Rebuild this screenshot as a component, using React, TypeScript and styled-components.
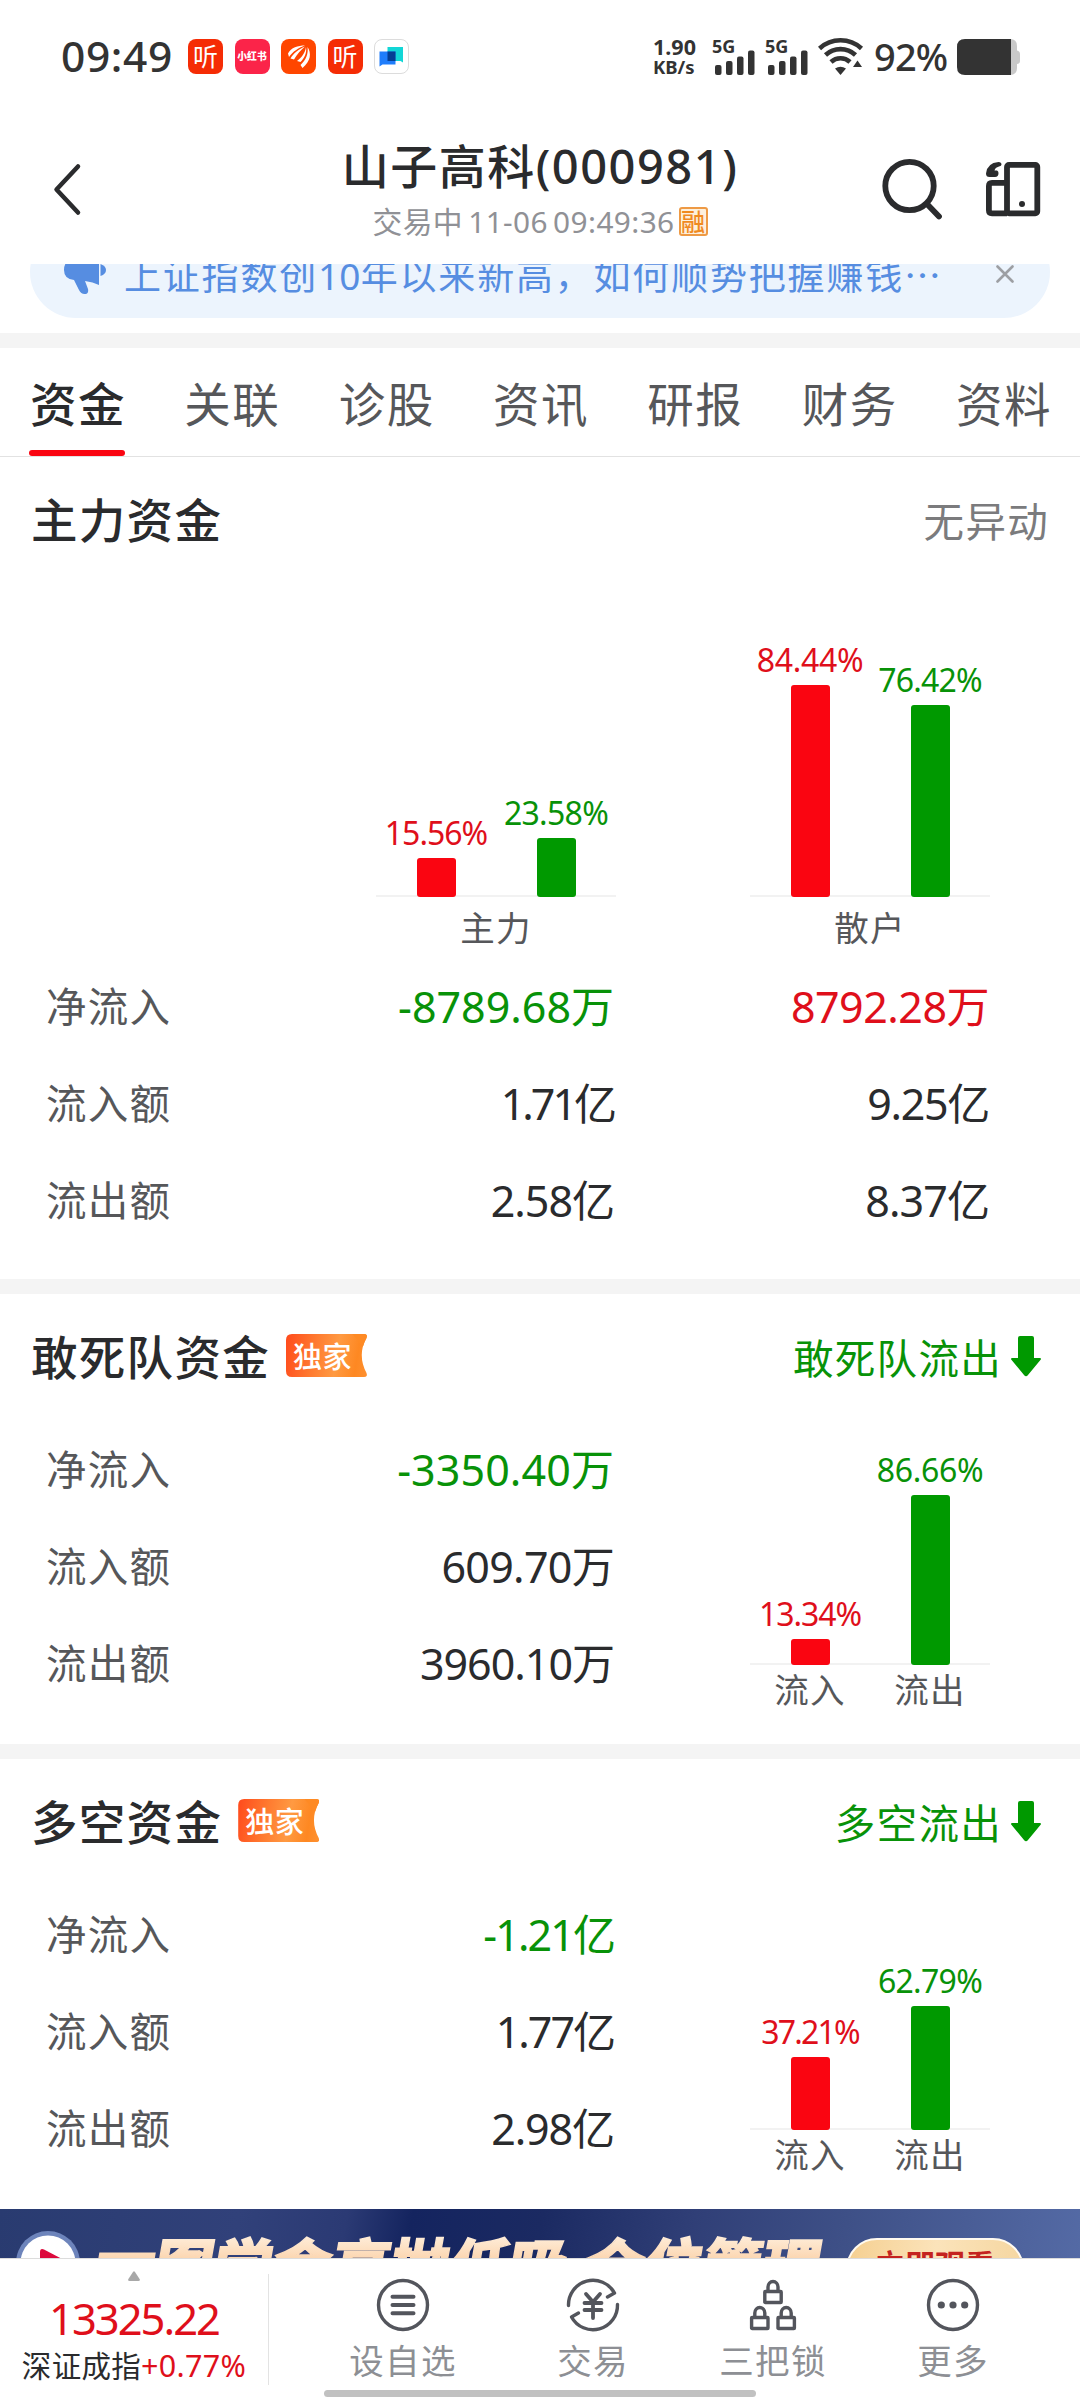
import React from "react";
import styled, { createGlobalStyle, css } from "styled-components";

const RED = "#df0f1b";
const GREEN = "#089208";
const BAR_RED = "#fa0511";
const BAR_GREEN = "#009900";
const INK = "#2a2b2d";
const GREY = "#56575a";

type Tone = "red" | "green" | "ink";
const toneColor = { red: RED, green: GREEN, ink: INK };

const GlobalStyle = createGlobalStyle`
  * { box-sizing: border-box; }
  body {
    margin: 0;
    background: #fff;
    color: ${INK};
    font-family: "Noto Sans", "Noto Sans CJK SC", sans-serif;
    -webkit-font-smoothing: antialiased;
  }
`;

const Screen = styled.div`
  position: relative;
  width: 1080px;
  height: 2400px;
  overflow: hidden;
  display: flex;
  flex-direction: column;
  background: #fff;
  white-space: nowrap;
`;

/* ---------- status bar ---------- */
const StatusBar = styled.div`
  height: 113px;
  flex: none;
  display: flex;
  align-items: center;
  padding: 0 60px 0 61px;
  color: #333;
`;
const Clock = styled.span`
  width: 127px;
  font-size: 42.5px;
  font-weight: 500;
  line-height: 50px;
  letter-spacing: 0.6px;
  padding-bottom: 2px;
`;
const AppIcons = styled.div`
  display: flex;
  gap: 11.5px;
`;
const AppIcon = styled.div<{ $bg: string; $size: number; $bold?: boolean; $outline?: boolean }>`
  width: 35px;
  height: 35px;
  border-radius: 8px;
  background: ${(p) => p.$bg};
  color: #fff;
  font-size: ${(p) => p.$size}px;
  font-weight: ${(p) => (p.$bold ? 900 : 400)};
  line-height: 35px;
  display: flex;
  align-items: center;
  justify-content: center;
  ${(p) => p.$outline && css`border: 1px solid #dcdcdc;`}
`;
const StatusRight = styled.div`
  margin-left: auto;
  display: flex;
  align-items: center;
`;
const NetSpeed = styled.div`
  width: 59px;
  display: flex;
  flex-direction: column;
  font-weight: 700;
  line-height: 20px;
  font-size: 18.5px;
`;
const SpeedValue = styled.span`
  font-size: 21.5px;
`;
const Signal = styled.div`
  width: 53px;
  height: 36px;
  display: flex;
  position: relative;
`;
const SignalLabel = styled.span`
  position: absolute;
  left: 0;
  top: -1px;
  font-size: 18px;
  font-weight: 700;
  line-height: 16px;
`;
const Percent = styled.span`
  width: 93px;
  padding-left: 10px;
  padding-bottom: 2px;
  font-size: 38px;
  font-weight: 500;
  line-height: 44px;
  letter-spacing: -0.8px;
`;

/* ---------- header ---------- */
const Header = styled.header`
  height: 151px;
  flex: none;
  display: grid;
  grid-template-columns: 240px 1fr 240px;
  align-items: center;
`;
const BackCell = styled.div`
  padding-left: 50px;
  display: flex;
`;
const TitleCell = styled.div`
  display: flex;
  flex-direction: column;
  align-items: center;
  padding-top: 4px;
`;
const StockTitle = styled.h1`
  margin: 0;
  font-size: 47px;
  font-weight: 500;
  line-height: 62px;
  letter-spacing: 1.5px;
`;
const SubTitle = styled.div`
  display: flex;
  align-items: center;
  font-size: 29.8px;
  line-height: 49px;
  letter-spacing: 0.4px;
  word-spacing: -3px;
  color: #909196;
`;
const MarginBadge = styled.span`
  margin-left: 4px;
  width: 29px;
  height: 29px;
  border: 2px solid #ee9a45;
  border-radius: 3px;
  background: #fdf0dc;
  color: #f08a1f;
  font-size: 24px;
  font-weight: 500;
  line-height: 25px;
  letter-spacing: 0;
  display: flex;
  justify-content: center;
`;
const ActionCell = styled.div`
  display: flex;
  gap: 41px;
  padding: 0 37px 0 41px;
`;

/* ---------- notice ---------- */
const NoticeClip = styled.div`
  height: 54px;
  flex: none;
  margin: 0 30px 15px;
  display: flex;
  align-items: flex-end;
  overflow: hidden;
`;
const NoticePill = styled.div`
  width: 100%;
  height: 92px;
  flex: none;
  border-radius: 46px;
  background: #ecf4fd;
  display: flex;
  align-items: center;
  padding: 3px 36px 0 33px;
  color: #568de1;
`;
const NoticeText = styled.span`
  margin-left: 17px;
  padding-top: 4px;
  font-size: 37px;
  letter-spacing: 1.8px;
  line-height: 50px;
`;
const TightDigits = styled.span`
  letter-spacing: 0.2px;
`;
const CloseIcon = styled.svg`
  margin-left: auto;
`;

const Divider = styled.div`
  height: 15px;
  flex: none;
  background: #f4f4f4;
`;

/* ---------- tabs ---------- */
const Tabs = styled.nav`
  height: 109px;
  flex: none;
  display: flex;
  justify-content: space-between;
  padding: 0 28px 0 30px;
  border-bottom: 1px solid #e2e2e2;
`;
const Tab = styled.div<{ $active?: boolean }>`
  width: 96px;
  font-size: 46.5px;
  letter-spacing: 1.5px;
  line-height: 112px;
  height: 108px;
  font-weight: ${(p) => (p.$active ? 500 : 400)};
  color: ${(p) => (p.$active ? INK : GREY)};
  display: flex;
  flex-direction: column;
  position: relative;
  ${(p) =>
    p.$active &&
    css`
      &::after {
        content: "";
        position: absolute;
        left: -1px;
        bottom: 0;
        width: 96px;
        height: 6px;
        border-radius: 3px;
        background: ${BAR_RED};
      }
    `}
`;

/* ---------- sections ---------- */
const Section = styled.section<{ $height: number }>`
  height: ${(p) => p.$height}px;
  flex: none;
`;
const SectionHead = styled.div`
  height: 127px;
  padding: 0 31px 1px 31px;
  display: flex;
  align-items: center;
`;
const SectionTitle = styled.h2`
  margin: 0;
  font-size: 46.5px;
  font-weight: 500;
  letter-spacing: 1.3px;
  line-height: 60px;
`;
const SectionStatus = styled.div<{ $green?: boolean }>`
  margin-left: auto;
  margin-right: ${(p) => (p.$green ? 8 : 0)}px;
  padding-bottom: 1px;
  display: flex;
  align-items: center;
  gap: 9px;
  font-size: 40.5px;
  letter-spacing: 1.3px;
  color: ${(p) => (p.$green ? GREEN : "#7b7b7d")};
`;
const Badge = styled.span`
  margin-left: 16px;
  margin-bottom: 3px;
  width: 81px;
  height: 43px;
  padding: 2px 0 0 7px;
  font-size: 29px;
  font-weight: 500;
  line-height: 41px;
  letter-spacing: 0.5px;
  color: #fff;
  background:
    linear-gradient(50deg, rgba(255, 90, 30, 0) 87%, #fe8a24 88%),
    linear-gradient(100deg, #ff4a1c 0%, #ff7a30 35%, #ff9a42 62%, #fe8822 85%, #fe9130 100%);
  clip-path: path("M6 0H78Q82 0 80.5 4Q71 21 80.5 39Q82 43 78 43H6Q0 43 0 37V6Q0 0 6 0Z");
`;

const Charts = styled.div`
  height: 374px;
  display: flex;
  justify-content: flex-end;
  align-items: flex-end;
  gap: 134px;
  padding-right: 90px;
`;
const ChartBox = styled.div`
  width: 240px;
`;
const Plot = styled.div`
  height: 244px;
  display: flex;
  align-items: flex-end;
  background: linear-gradient(#f2f2f2, #f2f2f2) bottom / 100% 2px no-repeat;
`;
const BarColumn = styled.div`
  width: 120px;
  display: flex;
  flex-direction: column;
  align-items: center;
`;
const BarValue = styled.span<{ $tone: "red" | "green"; $track: number }>`
  font-size: 32px;
  line-height: 32px;
  margin-bottom: 9px;
  letter-spacing: ${(p) => p.$track}px;
  color: ${(p) => toneColor[p.$tone]};
`;
const Bar = styled.div<{ $tone: "red" | "green" }>`
  width: 39px;
  border-radius: 3px;
  background: ${(p) => (p.$tone === "red" ? BAR_RED : BAR_GREEN)};
`;
const AxisLabels = styled.div<{ $line: number }>`
  display: flex;
  justify-content: space-around;
  font-size: 34.5px;
  letter-spacing: 1.2px;
  line-height: ${(p) => p.$line}px;
  color: ${GREY};
`;

const Body = styled.div`
  display: flex;
  justify-content: space-between;
  padding-right: 90px;
`;
const Table = styled.div`
  display: flex;
  flex-direction: column;
`;
const Row = styled.div`
  height: 97px;
  display: flex;
  align-items: center;
  padding: 0 0 4px 46px;
`;
const RowLabel = styled.span`
  width: 196px;
  font-size: 40.5px;
  letter-spacing: 1.3px;
  color: ${GREY};
`;
const Amount = styled.span<{ $tone: Tone; $track: number }>`
  width: 372px;
  text-align: right;
  font-size: 43px;
  letter-spacing: ${(p) => p.$track}px;
  color: ${(p) => toneColor[p.$tone]};
  & + & {
    width: 375px;
  }
`;

/* ---------- promo banner ---------- */
const Promo = styled.div`
  height: 49px;
  flex: none;
  display: flex;
  align-items: flex-start;
  overflow: hidden;
  padding-left: 16px;
  background: linear-gradient(100deg, #293b70 0%, #31417a 22%, #2b3a74 32%, #14245f 38%, #1b2a62 50%, #303f77 64%, #3e5087 78%, #546aa5 100%);
`;
const PromoText = styled.span`
  margin: 21px 0 0 15px;
  width: 733px;
  font-family: "Noto Sans CJK SC", sans-serif;
  font-size: 59px;
  font-weight: 900;
  line-height: 66px;
  transform: skewX(-10deg);
  transform-origin: 0 60%;
  word-spacing: 4px;
  color: transparent;
  -webkit-text-stroke: 1.5px transparent;
  background: linear-gradient(#fff3e4, #fbcfa4 36px);
  background-clip: text;
  -webkit-background-clip: text;
`;
const PromoLead = styled.span`
  line-height: 0;
  vertical-align: 7px;
`;
const PromoButton = styled.span`
  margin: 29px 0 0 18px;
  width: 178px;
  height: 62px;
  flex: none;
  border: 2px solid #fffaf0;
  border-radius: 31px;
  background: linear-gradient(95deg, #f5cf90, #fbe3ba 50%, #f5d6a0);
  text-align: center;
  font-size: 30px;
  font-weight: 700;
  line-height: 50px;
  color: #c4231f;
`;
const PlayIcon = styled.svg`
  flex: none;
  margin-top: 22px;
`;

/* ---------- bottom bar ---------- */
const BottomBar = styled.footer`
  height: 142px;
  flex: none;
  display: flex;
  border-top: 1px solid #dcdcdc;
`;
const IndexBox = styled.div`
  width: 269px;
  height: 111px;
  margin-top: 15px;
  border-right: 1px solid #e3e3e3;
  display: flex;
  flex-direction: column;
  align-items: center;
  margin-right: 39px;
`;
const UpTriangle = styled.svg`
  display: block;
  flex: none;
  margin-top: -3px;
`;
const IndexValue = styled.span`
  margin-top: 15px;
  font-size: 43.5px;
  line-height: 44px;
  letter-spacing: -2px;
  color: ${RED};
`;
const IndexName = styled.span`
  margin-top: 7px;
  font-size: 29.5px;
  line-height: 36px;
  letter-spacing: 0.3px;
`;
const IndexChange = styled.span`
  font-size: 30.5px;
  color: ${RED};
`;
const NavGrid = styled.div`
  display: grid;
  grid-template-columns: 190px 190px 170px 190px;
`;
const NavItem = styled.div`
  display: flex;
  flex-direction: column;
  align-items: center;
  padding-top: 18px;
  font-size: 34.5px;
  letter-spacing: 1.3px;
  line-height: 50px;
  color: #8d8f94;
`;
const NavIcon = styled.svg`
  display: block;
  width: 56px;
  height: 56px;
  margin-bottom: 3px;
  fill: none;
  stroke: #53555c;
  stroke-width: 3.4;
  stroke-linecap: round;
  stroke-linejoin: round;
`;
const HomeIndicator = styled.div`
  position: absolute;
  left: 324px;
  bottom: 3px;
  width: 432px;
  height: 7px;
  border-radius: 4px;
  background: #c1c1c1;
`;

/* ---------- data ---------- */
type BarDatum = { value: number; tone: "red" | "green"; track?: number };
type AmountDatum = { text: string; tone?: Tone; track?: number };
type RowDatum = { label: string; amounts: AmountDatum[] };

const tabs = ["资金", "关联", "诊股", "资讯", "研报", "财务", "资料"];

const mainRows: RowDatum[] = [
  { label: "净流入", amounts: [{ text: "-8789.68万", tone: "green" }, { text: "8792.28万", tone: "red", track: -0.5 }] },
  { label: "流入额", amounts: [{ text: "1.71亿", track: -3 }, { text: "9.25亿", track: -1.3 }] },
  { label: "流出额", amounts: [{ text: "2.58亿", track: -1 }, { text: "8.37亿", track: -0.9 }] },
];
const squadRows: RowDatum[] = [
  { label: "净流入", amounts: [{ text: "-3350.40万", tone: "green", track: 0.1 }] },
  { label: "流入额", amounts: [{ text: "609.70万", track: -0.7 }] },
  { label: "流出额", amounts: [{ text: "3960.10万", track: -1 }] },
];
const longShortRows: RowDatum[] = [
  { label: "净流入", amounts: [{ text: "-1.21亿", tone: "green", track: -1.9 }] },
  { label: "流入额", amounts: [{ text: "1.77亿", track: -2 }] },
  { label: "流出额", amounts: [{ text: "2.98亿", track: -1.1 }] },
];

/* ---------- parts ---------- */
function BarChart({ bars, labels, scale, line }: { bars: BarDatum[]; labels: string[]; scale: number; line: number }) {
  return (
    <ChartBox>
      <Plot>
        {bars.map((b) => (
          <BarColumn key={b.tone}>
            <BarValue $tone={b.tone} $track={b.track ?? -0.3}>{b.value.toFixed(2)}%</BarValue>
            <Bar $tone={b.tone} style={{ height: Math.round(b.value * scale) }} />
          </BarColumn>
        ))}
      </Plot>
      <AxisLabels $line={line}>
        {labels.map((l) => <span key={l}>{l}</span>)}
      </AxisLabels>
    </ChartBox>
  );
}

function FundTable({ rows }: { rows: RowDatum[] }) {
  return (
    <Table>
      {rows.map((r) => (
        <Row key={r.label}>
          <RowLabel>{r.label}</RowLabel>
          {r.amounts.map((a) => (
            <Amount key={a.text} $tone={a.tone ?? "ink"} $track={a.track ?? 0}>{a.text}</Amount>
          ))}
        </Row>
      ))}
    </Table>
  );
}

function SignalBars() {
  return (
    <Signal>
      <SignalLabel>5G</SignalLabel>
      <svg width="48" height="36" viewBox="0 0 48 36" fill="#333">
        <rect x="3" y="26" width="6.5" height="10" rx="2" />
        <rect x="14" y="22" width="6.5" height="14" rx="2" />
        <rect x="25" y="17.5" width="6.5" height="18.5" rx="2" />
        <rect x="36" y="11.5" width="6.5" height="24.5" rx="2" />
      </svg>
    </Signal>
  );
}

function DownArrow() {
  return (
    <svg width="30" height="41" viewBox="0 0 30 41" fill={BAR_GREEN}>
      <path d="M9 0H21Q23 0 23 2V22H28.5Q31 22 29.4 24L17 39Q15 41.4 13 39L.6 24Q-1 22 1.5 22H7V2Q7 0 9 0Z" />
    </svg>
  );
}

function Lock({ x, y }: { x: number; y: number }) {
  return (
    <g transform={`translate(${x} ${y})`}>
      <path d="M4.4 10.5V7A5 5.5 0 0 1 14.4 7V10.5" />
      <rect x="1.2" y="11.5" width="16.4" height="11" rx="0.6" />
    </g>
  );
}

function FundSection({ title, status, rows, bars }: { title: string; status: string; rows: RowDatum[]; bars: BarDatum[] }) {
  return (
    <Section $height={450}>
      <SectionHead>
        <SectionTitle>{title}</SectionTitle>
        <Badge>独家</Badge>
        <SectionStatus $green>
          {status}
          <DownArrow />
        </SectionStatus>
      </SectionHead>
      <Body>
        <FundTable rows={rows} />
        <BarChart bars={bars} labels={["流入", "流出"]} scale={1.967} line={50} />
      </Body>
    </Section>
  );
}

export default function App() {
  return (
    <Screen>
      <GlobalStyle />
      <StatusBar>
        <Clock>09:49</Clock>
        <AppIcons>
          <AppIcon $bg="#f52c05" $size={25}>听</AppIcon>
          <AppIcon $bg="#fb2449" $size={9.8} $bold>小红书</AppIcon>
          <AppIcon $bg="#ff4600" $size={10}>
            <svg width="27" height="27" viewBox="0 0 27 27" fill="#fff">
              <path d="M20 2.500C13 2.500 6 4.500 3 10.500L4 14C8 8.500 13 5 20 2.500Z" />
              <path d="M20 3.500C14 6 8.500 10 5.500 15.500L9 16.500C12 11 16 7 20 3.500Z" />
              <path d="M21 4C20 10 17 14 12 18L15.500 19C19.500 15 22 10 21 4Z" />
              <path d="M22.500 4C26.500 10 26 18 17.500 25L15.500 22C21 17 23.500 11 22.500 4Z" />
            </svg>
          </AppIcon>
          <AppIcon $bg="#f52c05" $size={25}>听</AppIcon>
          <AppIcon $bg="#fff" $size={10} $outline>
            <svg width="27" height="27" viewBox="0 0 27 27">
              <path d="M9.500 4H25V19.500L22.500 18H9.500Z" fill="#12d6d6" />
              <path d="M1.500 8.500H17.500V21.500H4.500L1.500 23.500Z" fill="#1f7dfb" />
              <path d="M9.500 8.500H17.500V18H9.500Z" fill="#053e93" />
            </svg>
          </AppIcon>
        </AppIcons>
        <StatusRight>
          <NetSpeed>
            <SpeedValue>1.90</SpeedValue>
            <span>KB/s</span>
          </NetSpeed>
          <SignalBars />
          <SignalBars />
          <svg width="46" height="37" viewBox="0 0 46 37" fill="none" stroke="#333" strokeWidth="4.600">
            <path d="M1.500 10.500A31 31 0 0 1 43.500 10.500" />
            <path d="M7.500 17A22 22 0 0 1 37.500 17" />
            <path d="M13 24A14 14 0 0 1 32 24" />
            <path d="M22.500 37L17 30.500Q22.500 27 28 30.500Z" fill="#333" stroke="none" />
            <path d="M35 29L39.500 22.500L44 29Z" fill="#333" stroke="none" />
          </svg>
          <Percent>92%</Percent>
          <svg width="63" height="36" viewBox="0 0 63 36">
            <path d="M50 0H53Q60 0 60 7V11.500Q63 12 63 15V22Q63 24.500 60 25V29Q60 36 53 36H50Z" fill="#c9c9c9" />
            <path d="M8 0H54V36H8Q0 36 0 28V8Q0 0 8 0Z" fill="#333" />
          </svg>
        </StatusRight>
      </StatusBar>

      <Header>
        <BackCell>
          <svg width="34" height="56" viewBox="0 0 34 56" fill="none" stroke={INK} strokeWidth="4.500" strokeLinecap="round" strokeLinejoin="round">
            <path d="M28 5.500L6.500 28.500L28 51.500" />
          </svg>
        </BackCell>
        <TitleCell>
          <StockTitle>山子高科(000981)</StockTitle>
          <SubTitle>
            交易中 11-06 09:49:36
            <MarginBadge>融</MarginBadge>
          </SubTitle>
        </TitleCell>
        <ActionCell>
          <svg width="64" height="64" viewBox="0 0 64 64" fill="none" stroke={INK} strokeWidth="5.800">
            <circle cx="28.500" cy="29" r="24.200" />
            <path d="M46 47L58 59.500" strokeWidth="5.800" strokeLinecap="round" />
          </svg>
          <svg width="56" height="64" viewBox="0 0 56 64" fill="none" stroke={INK} strokeWidth="5.800">
            <rect x="21" y="7.900" width="30.300" height="48.400" rx="2" />
            <path d="M20.500 25.800H6Q2.900 25.800 2.900 29V53.300Q2.900 56.300 6 56.300H21" />
            <circle cx="36" cy="47" r="3" fill={INK} stroke="none" />
            <path d="M12.500 5Q15.500 5 15.500 7.500Q15.500 9 13 9.500Q9 10.500 8.500 13.500L11 13.500Q12.500 14 12.500 16Q12.500 20 9 20H3.500Q0 20 0 16.500Q1 6 12.500 5Z" fill={INK} stroke="none" />
          </svg>
        </ActionCell>
      </Header>

      <NoticeClip>
        <NoticePill>
          <svg width="44" height="44" viewBox="0 0 44 44" fill="#568de1">
            <path d="M9 8H20Q28 8 36 1V33Q30 30 22 29L25 37Q26 42 21.500 42Q18 42 16 38L11 28Q1 27 1 18Q1 9 9 8Z" />
            <path d="M37.500 12Q43 14 43 18Q43 22 37.500 24Z" />
          </svg>
          <NoticeText>上证指数创<TightDigits>10</TightDigits>年以来新高，如何顺势把握赚钱⋯</NoticeText>
          <CloseIcon width="18" height="18" viewBox="0 0 18 18" fill="none" stroke="#9d9fa3" strokeWidth="2.600" strokeLinecap="round">
            <path d="M1.500 1.500L16.500 16.500M16.500 1.500L1.500 16.500" />
          </CloseIcon>
        </NoticePill>
      </NoticeClip>

      <Divider />
      <Tabs>
        {tabs.map((t, i) => <Tab key={t} $active={i === 0}>{t}</Tab>)}
      </Tabs>

      <Section $height={822}>
        <SectionHead>
          <SectionTitle>主力资金</SectionTitle>
          <SectionStatus>无异动</SectionStatus>
        </SectionHead>
        <Charts>
          <BarChart
            bars={[{ value: 15.56, tone: "red", track: -1 }, { value: 23.58, tone: "green", track: -0.7 }]}
            labels={["主力"]}
            scale={2.51}
            line={61}
          />
          <BarChart
            bars={[{ value: 84.44, tone: "red" }, { value: 76.42, tone: "green", track: -0.8 }]}
            labels={["散户"]}
            scale={2.51}
            line={61}
          />
        </Charts>
        <FundTable rows={mainRows} />
      </Section>

      <Divider />
      <FundSection
        title="敢死队资金"
        status="敢死队流出"
        rows={squadRows}
        bars={[{ value: 13.34, tone: "red", track: -1.1 }, { value: 86.66, tone: "green" }]}
      />
      <Divider />
      <FundSection
        title="多空资金"
        status="多空流出"
        rows={longShortRows}
        bars={[{ value: 37.21, tone: "red", track: -1.8 }, { value: 62.79, tone: "green", track: -0.7 }]}
      />

      <Promo>
        <PlayIcon width="64" height="64" viewBox="0 0 64 64">
          <circle cx="32" cy="32" r="32" fill="#6d84bb" />
          <circle cx="32" cy="32" r="27.500" fill="#fff" />
          <path d="M24 21Q24 17 28 18.500L50 30Q53 32 50 34L28 46Q24 48 24 44Z" fill="#dc0a3c" />
        </PlayIcon>
        <PromoText><PromoLead>一</PromoLead>图学会高抛低吸 仓位管理</PromoText>
        <PromoButton>立即观看</PromoButton>
      </Promo>

      <BottomBar>
        <IndexBox>
          <UpTriangle width="12" height="10" viewBox="0 0 12 10" fill="#a8a8a8">
            <path d="M5 1Q6 -0.500 7 1L11.600 8Q12.500 10 10.500 10H1.500Q-0.500 10 .4 8Z" />
          </UpTriangle>
          <IndexValue>13325.22</IndexValue>
          <IndexName>深证成指<IndexChange>+0.77%</IndexChange></IndexName>
        </IndexBox>
        <NavGrid>
          <NavItem>
            <NavIcon viewBox="0 0 56 56">
              <circle cx="28" cy="28" r="24.500" />
              <path d="M17.500 19.800H38.500M17.500 28H38.500M17.500 36.200H38.500" strokeWidth="4" />
            </NavIcon>
            设自选
          </NavItem>
          <NavItem>
            <NavIcon viewBox="0 0 56 56">
              <path d="M3.500 28.500A24.500 24.500 0 0 1 49.500 16L42.500 20" />
              <path d="M52.500 27.500A24.500 24.500 0 0 1 6.500 40L13.500 36" />
              <path d="M21 17L28 25L35 17M19.500 26H36.500M19.500 33H36.500M28 25V41" strokeWidth="3.800" />
            </NavIcon>
            交易
          </NavItem>
          <NavItem>
            <NavIcon viewBox="0 0 56 56">
              <Lock x={18.600} y={3} />
              <Lock x={5.400} y={29} />
              <Lock x={31.800} y={29} />
            </NavIcon>
            三把锁
          </NavItem>
          <NavItem>
            <NavIcon viewBox="0 0 56 56">
              <circle cx="28" cy="28" r="24.500" />
              <g fill="#53555c" stroke="none">
                <circle cx="16.300" cy="28" r="3.600" />
                <circle cx="28" cy="28" r="3.600" />
                <circle cx="39.700" cy="28" r="3.600" />
              </g>
            </NavIcon>
            更多
          </NavItem>
        </NavGrid>
      </BottomBar>
      <HomeIndicator />
    </Screen>
  );
}
